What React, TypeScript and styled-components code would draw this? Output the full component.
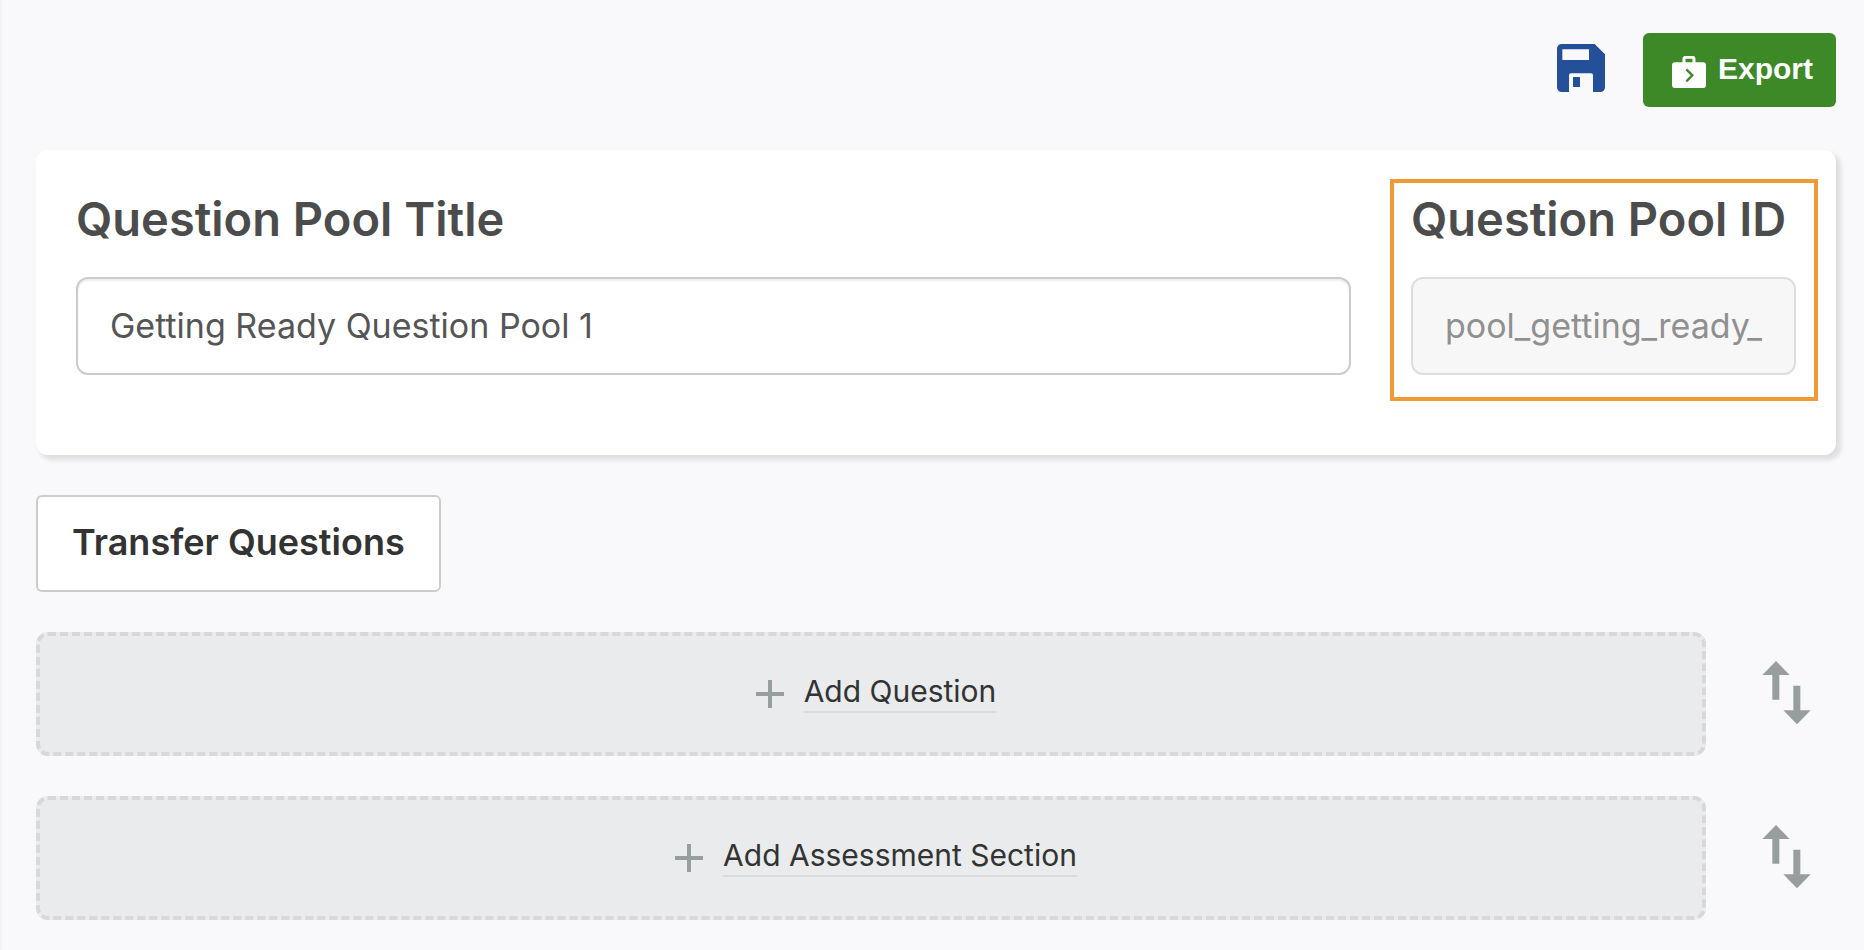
import React from 'react';
import styled, { createGlobalStyle } from 'styled-components';

const GlobalStyle = createGlobalStyle`
  *, *::before, *::after { box-sizing: border-box; }
  body {
    margin: 0;
    background: #f9f9fc;
    color: #333;
    font-family: Inter, "Liberation Sans", sans-serif;
  }
  button, input { font-family: inherit; margin: 0; }
  button { cursor: pointer; }
  svg { display: block; flex: none; }
`;

const Page = styled.main`
  min-height: 100vh;
  padding: 33px 28px 30px 34px;
  border-left: 2px solid #f5f5f7;
`;

const Toolbar = styled.div`
  display: flex;
  justify-content: flex-end;
  align-items: center;
  gap: 38px;
  margin-bottom: 43px;
`;

const SaveButton = styled.button`
  padding: 0 0 4px;
  border: 0;
  background: none;
  color: #24509a;
`;

const ExportButton = styled.button`
  display: flex;
  align-items: center;
  gap: 12px;
  height: 74px;
  padding: 0 23px 0 29px;
  border: 0;
  border-radius: 6px;
  background: #3d8827;
  color: #fff;
  font-family: "Liberation Sans", Arial, sans-serif;
  font-size: 30px;
  font-weight: 700;
  line-height: 36px;

  svg { margin-top: 4px; }
  span { margin-bottom: 2px; }
`;

const Card = styled.section`
  display: flex;
  gap: 60px;
  padding: 40px 40px 80px;
  border-radius: 12px;
  background: #fff;
  box-shadow: 4px 4px 4px 1px #dfdfe1;
`;

const Field = styled.div<{ $width?: number }>`
  position: relative;
  flex: ${p => (p.$width ? `0 0 ${p.$width}px` : '1 1 0')};
  min-width: 0;
`;

const FieldLabel = styled.label`
  display: block;
  margin-bottom: 29px;
  color: #4c4c4c;
  font-size: 47px;
  font-weight: 600;
  line-height: 58px;
  white-space: nowrap;
`;

const TextInput = styled.input`
  display: block;
  width: 100%;
  height: 98px;
  padding: 0 32px 2px;
  border: 2px solid #ccc;
  border-radius: 12px;
  background: #fff;
  box-shadow: inset 0 2px 2px rgba(0, 0, 0, 0.07);
  color: #555;
  font-size: 34px;

  &:disabled {
    border-color: #dedede;
    background: #f7f7f7;
    box-shadow: none;
    color: #909090;
  }
`;

const Highlight = styled.div`
  position: absolute;
  inset: -11px -22px -26px -21px;
  border: 4px solid #f09a37;
  pointer-events: none;
`;

const TransferButton = styled.button`
  display: block;
  height: 97px;
  margin: 40px 0;
  padding: 0 34px 4px;
  border: 2px solid #ccc;
  border-radius: 6px;
  background: #fff;
  color: #333;
  font-size: 36px;
  font-weight: 600;
`;

const AddList = styled.div`
  display: grid;
  gap: 40px;
`;

const AddRow = styled.div`
  display: flex;
  align-items: center;
  justify-content: space-between;
  gap: 56px;
  padding-right: 25px;
`;

const AddButton = styled.button`
  display: flex;
  flex: 1;
  align-items: center;
  justify-content: center;
  gap: 20px;
  height: 124px;
  padding: 0 0 0 10px;
  border: 4px dashed #d8d8d8;
  border-radius: 12px;
  background: #e9ebec;
  color: #333;
  font-size: 30px;
  line-height: 40px;

  svg { color: #979e9e; }
`;

const AddLabel = styled.span`
  margin-bottom: 4px;
  border-bottom: 2px solid #dadbdd;
`;

const MoveButton = styled.button`
  padding: 0 0 2px;
  border: 0;
  background: none;
  color: #979e9d;
`;

const SaveIcon = () => (
  <svg width="48" height="48" viewBox="0 0 144 144" fill="currentColor" fillRule="evenodd" aria-hidden="true">
    <path d="M14 0H113L144 31V130A14 14 0 0 1 130 144H108V94A6 6 0 0 0 102 88H42A6 6 0 0 0 36 94V144H14A14 14 0 0 1 0 130V14A14 14 0 0 1 14 0ZM16 16V48H96V16Z" />
    <path d="M48 99H69V129H48Z" />
  </svg>
);

const CaseIcon = () => (
  <svg width="34" height="32" viewBox="0 0 102 96" fill="none" aria-hidden="true">
    <path d="M36 22V9Q36 4 41 4H61Q66 4 66 9V22" stroke="currentColor" strokeWidth="9" />
    <rect y="19" width="102" height="77" rx="9" fill="currentColor" />
    <path d="M43 40L61 58L43 76" stroke="#3d8827" strokeWidth="7" />
  </svg>
);

const PlusIcon = () => (
  <svg width="28" height="28" viewBox="0 0 28 28" fill="currentColor" aria-hidden="true">
    <path d="M12 0H16V12H28V16H16V28H12V16H0V12H12Z" />
  </svg>
);

const MoveIcon = () => (
  <svg width="49" height="64" viewBox="0 0 147 192" fill="currentColor" aria-hidden="true">
    <path d="M42 0L83 42H52V116H31V42H1Z" />
    <path d="M94 74H115V148H146L105 190L64 148H94Z" />
  </svg>
);

const ADDABLE = ['Question', 'Assessment Section'];

export default function App() {
  return (
    <>
      <GlobalStyle />
      <Page>
        <Toolbar>
          <SaveButton type="button" aria-label="Save">
            <SaveIcon />
          </SaveButton>
          <ExportButton type="button">
            <CaseIcon />
            <span>Export</span>
          </ExportButton>
        </Toolbar>

        <Card>
          <Field>
            <FieldLabel htmlFor="pool-title">Question Pool Title</FieldLabel>
            <TextInput id="pool-title" type="text" defaultValue="Getting Ready Question Pool 1" />
          </Field>
          <Field $width={385}>
            <FieldLabel htmlFor="pool-id">Question Pool ID</FieldLabel>
            <TextInput id="pool-id" type="text" defaultValue="pool_getting_ready_" disabled />
            <Highlight />
          </Field>
        </Card>

        <TransferButton type="button">Transfer Questions</TransferButton>

        <AddList>
          {ADDABLE.map(name => (
            <AddRow key={name}>
              <AddButton type="button">
                <PlusIcon />
                <AddLabel>Add {name}</AddLabel>
              </AddButton>
              <MoveButton type="button" aria-label={`Move ${name}`}>
                <MoveIcon />
              </MoveButton>
            </AddRow>
          ))}
        </AddList>
      </Page>
    </>
  );
}
